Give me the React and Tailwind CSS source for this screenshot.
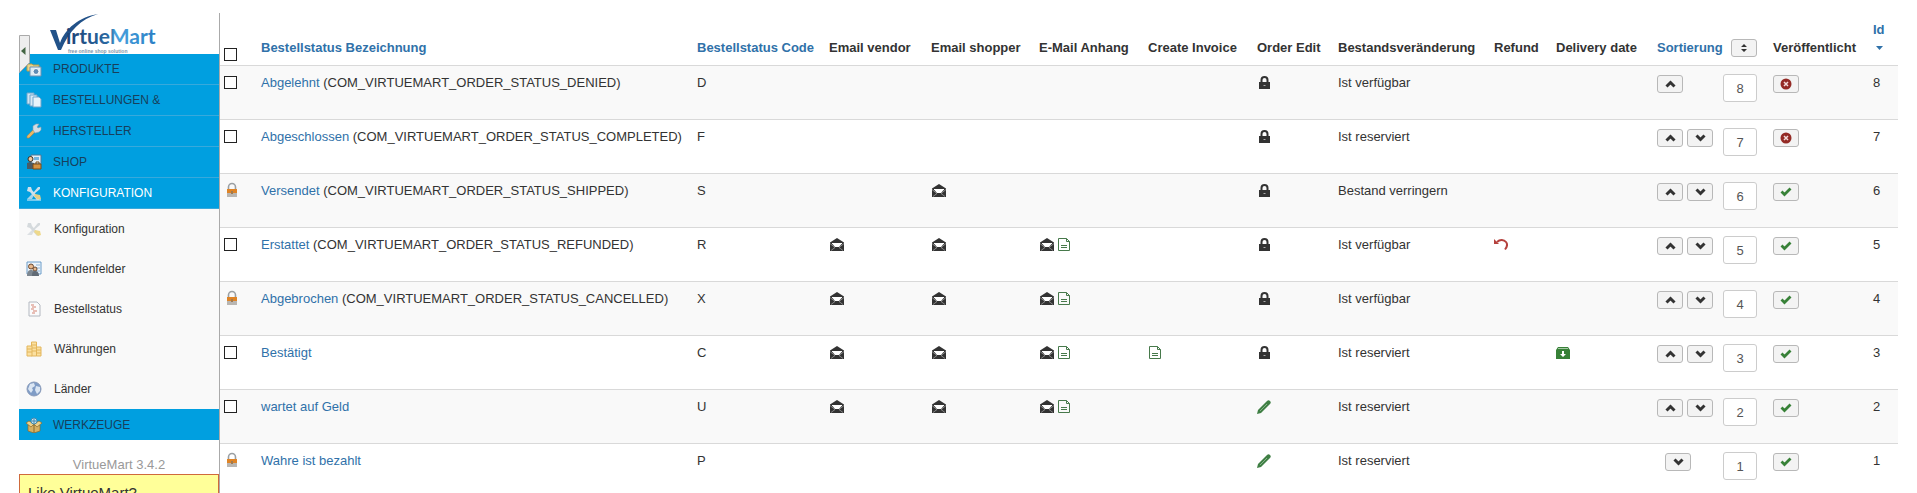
import { useState } from 'react';

const mainMenu = [
  { label: 'Produkte', icon: 'products' },
  { label: 'Bestellungen &', icon: 'orders' },
  { label: 'Hersteller', icon: 'wrench' },
  { label: 'Shop', icon: 'shop' },
  { label: 'Konfiguration', icon: 'tools', active: true },
];

const subMenu = [
  { label: 'Konfiguration', icon: 'toolsLight' },
  { label: 'Kundenfelder', icon: 'fields' },
  { label: 'Bestellstatus', icon: 'status' },
  { label: 'Währungen', icon: 'coins' },
  { label: 'Länder', icon: 'globe' },
];

const initialRows = [
  { id: 8, name: 'Abgelehnt', key: 'COM_VIRTUEMART_ORDER_STATUS_DENIED', code: 'D', edit: 'lock', stock: 'Ist verfügbar', up: true },
  { id: 7, name: 'Abgeschlossen', key: 'COM_VIRTUEMART_ORDER_STATUS_COMPLETED', code: 'F', edit: 'lock', stock: 'Ist reserviert', up: true, down: true },
  { id: 6, name: 'Versendet', key: 'COM_VIRTUEMART_ORDER_STATUS_SHIPPED', code: 'S', core: true, shopper: true, edit: 'lock', stock: 'Bestand verringern', up: true, down: true, published: true },
  { id: 5, name: 'Erstattet', key: 'COM_VIRTUEMART_ORDER_STATUS_REFUNDED', code: 'R', vendor: true, shopper: true, attach: true, edit: 'lock', stock: 'Ist verfügbar', refund: true, up: true, down: true, published: true },
  { id: 4, name: 'Abgebrochen', key: 'COM_VIRTUEMART_ORDER_STATUS_CANCELLED', code: 'X', core: true, vendor: true, shopper: true, attach: true, edit: 'lock', stock: 'Ist verfügbar', up: true, down: true, published: true },
  { id: 3, name: 'Bestätigt', code: 'C', vendor: true, shopper: true, attach: true, invoice: true, edit: 'lock', stock: 'Ist reserviert', delivery: true, up: true, down: true, published: true },
  { id: 2, name: 'wartet auf Geld', code: 'U', vendor: true, shopper: true, attach: true, edit: 'pencil', stock: 'Ist reserviert', up: true, down: true, published: true },
  { id: 1, name: 'Wahre ist bezahlt', code: 'P', core: true, edit: 'pencil', stock: 'Ist reserviert', down: true, published: true },
];

/* ---------- icons ---------- */

function ToolsShape({ handle, metal }) {
  return (
    <>
      <path d="M2 2l3 0 1 3 7 8-2 2-7-8-3-1z" fill={metal} />
      <path d="M14 2l-2 0-5 6 1 1 6-5z" fill={metal} />
      <path d="M7 8L1 14h5l2-4z" fill={metal} opacity="0.8" />
      <path d="M9 9l5 1 1 4-3 1-4-4z" fill={handle} />
    </>
  );
}

function MenuIcon({ name }) {
  const shapes = {
    products: (
      <>
        <path d="M1 3h5l1 1h6v6H1z" fill="#e9d48a" stroke="#b39a4a" />
        <path d="M4 6h11v9H4z" fill="#dcebf5" stroke="#6d93b4" />
        <circle cx="10" cy="10.500" r="3" fill="#5f8cb5" stroke="#fff" />
      </>
    ),
    orders: (
      <>
        <path d="M1 1h7v11H1z" fill="#cfe4f3" stroke="#6fa5cb" />
        <path d="M4 3h7v11H4z" fill="#d9eaf6" stroke="#6fa5cb" />
        <path d="M7 5h6l2 2v8H7z" fill="#e8f3fa" stroke="#6fa5cb" />
      </>
    ),
    wrench: (
      <>
        <path d="M1 13l6-6 2 2-6 6-2 0z" fill="#e5b766" stroke="#a98447" strokeWidth="0.600" />
        <path d="M7 7V3l3-2 3 0-2 3 1 1 3-1v3l-2 2-4 1z" fill="#d3dde4" stroke="#8ba1b0" strokeWidth="0.600" />
      </>
    ),
    shop: (
      <>
        <path d="M5 1h10v9H5z" fill="#e4eef5" stroke="#4f7795" />
        <path d="M8 3h5v3H8z" fill="#74b4dd" />
        <circle cx="4.500" cy="5" r="2.500" fill="#efc79b" stroke="#3c3128" />
        <path d="M1 15V9l3-1 4 1v6z" fill="#4b5b66" />
        <path d="M7 10h8v5H7z" fill="#d79443" stroke="#7c4d16" />
        <path d="M10 10V8h3v2" fill="none" stroke="#7c4d16" />
      </>
    ),
    tools: (
      <>
        <ToolsShape metal="#cfe0ea" handle="#e5cf86" />
        <path d="M1 15h14" stroke="#e8f2f8" />
      </>
    ),
    toolsLight: <ToolsShape metal="#d5dadd" handle="#eed98c" />,
    fields: (
      <>
        <path d="M1 1h14v12H1z" fill="#eef5fb" stroke="#6b9cc9" />
        <path d="M10 4h4M10 7h4M10 10h4" stroke="#8fb4d6" />
        <circle cx="5" cy="5.500" r="2.500" fill="#e9b88c" stroke="#6a4a32" />
        <path d="M1 15c0-5 2-6 4-6s4 1 4 6z" fill="#7d8790" />
        <circle cx="9" cy="8" r="2" fill="#e9b88c" stroke="#6a4a32" />
        <path d="M6 15c0-4 1-5 3-5s4 1 4 5z" fill="#616b75" />
      </>
    ),
    status: (
      <>
        <path d="M3 1h8l3 3v11H3z" fill="#fbfbfc" stroke="#b3b8c0" />
        <path d="M5 4h3M6 6h4M5 8h3M7 10h4M6 12h3" stroke="#d58373" />
      </>
    ),
    coins: (
      <g fill="#fbe0a0" stroke="#e3b65c">
        <path d="M5.500 1h5v14h-5z" />
        <path d="M1 5h5v10H1zM10.500 6H15v9h-4.500z" />
        <path d="M1 8h5M1 11h5M6 4h5M6 7h5M6 10h5M11 9h4M11 12h4" />
      </g>
    ),
    globe: (
      <>
        <circle cx="8" cy="8" r="7" fill="#7f9cc6" stroke="#8b9cba" />
        <path d="M4 3l4-1 1 3-3 2 1 2-2 3-3-4zM10 5l4 1 0 4-3 3-2-4z" fill="#dbe6f3" />
      </>
    ),
    box: (
      <>
        <path d="M2 8h12v6l-6 2-6-2z" fill="#d6b062" stroke="#8a6a2c" strokeWidth="0.700" />
        <path d="M0 6l3-2 5 3-3 3zM16 6l-3-2-5 3 3 3z" fill="#edd08a" stroke="#8a6a2c" strokeWidth="0.700" />
        <path d="M8 8v8" stroke="#8a6a2c" />
        <circle cx="8" cy="4" r="3" fill="#bfe3f5" stroke="#4488ad" />
        <path d="M8 2v4M6 4h4" stroke="#4488ad" />
      </>
    ),
  };
  return (
    <svg viewBox="0 0 16 16" className="size-4 shrink-0" aria-hidden="true">
      {shapes[name]}
    </svg>
  );
}

function OpenEnvelope() {
  return (
    <svg viewBox="0 0 14 13" className="mt-0.5 ml-px h-[13px] w-3.5" aria-hidden="true">
      <path d="M0 4.500L7 0l7 4.500V13H0z" fill="#333" />
      <path d="M2 5h10v.5L9 9H5L2 5.500z" fill="#fff" />
      <path d="M0 5.500l5 4-4 3M14 5.500l-5 4 4 3" fill="none" stroke="#aaa" strokeWidth="0.700" />
    </svg>
  );
}

function SheetIcon() {
  return (
    <svg viewBox="0 0 12 13" className="mt-0.5 ml-px h-[13px] w-3" fill="none" stroke="#47794b" aria-hidden="true">
      <path d="M.5 .5h8l3 3v9H.5z" />
      <path d="M8.500 .5v3h3M3 7.500h6M3 9.500h6" />
    </svg>
  );
}

function LockIcon() {
  return (
    <svg viewBox="0 0 11 13" className="mt-0.5 ml-0.5 h-[13px] w-[11px]" aria-hidden="true">
      <path d="M2.500 7V4a3 3 0 0 1 6 0v3" fill="none" stroke="#333" strokeWidth="2" />
      <path d="M0 6h11v7H0z" fill="#333" />
      <path d="M4.500 9.500h2" stroke="#aaa" />
    </svg>
  );
}

function PencilIcon() {
  return (
    <svg viewBox="0 0 14 14" className="mt-0.5 h-3.5 w-3.5" aria-hidden="true">
      <path d="M0 14l1-4L10 1c1-1 2-1 3 0s1 2 0 3L4 13z" fill="#3f7f44" />
      <path d="M3 11l7-7" stroke="#86b389" />
    </svg>
  );
}

function UndoIcon() {
  return (
    <svg viewBox="0 0 14 14" className="mt-0.5 h-3.5 w-3.5" aria-hidden="true">
      <path d="M3 4c3-3 7-2.500 9 0s1 5-1 7.500" fill="none" stroke="#b5413d" strokeWidth="2" />
      <path d="M0 1v5h5z" fill="#b5413d" />
    </svg>
  );
}

function ArchiveIcon() {
  return (
    <svg viewBox="0 0 14 13" className="mt-0.5 h-[13px] w-3.5" aria-hidden="true">
      <path d="M2 1h10l2 3v9H0V4z" fill="#378137" />
      <path d="M2 2.500h10" stroke="#a4c8a4" />
      <path d="M6 5h2v3h2l-3 3-3-3h2z" fill="#fff" />
    </svg>
  );
}

function PadlockIcon() {
  return (
    <svg viewBox="0 0 12 16" className="ml-0.5 h-4 w-3" aria-hidden="true">
      <path d="M2.500 8V5a3.500 3.500 0 0 1 7 0v3" fill="none" stroke="#9a9fa3" strokeWidth="1.600" />
      <path d="M1 7h10v4H1z" fill="#df8426" />
      <path d="M1 11h10v4H1z" fill="#b9b6b2" />
      <path d="M5 9h2v3H5z" fill="#a07a50" />
    </svg>
  );
}

function Chevron({ dir }) {
  return (
    <svg viewBox="0 0 11 8" className="h-2 w-[11px]" aria-hidden="true">
      <path d={dir === 'up' ? 'M1.500 6.500l4-4 4 4' : 'M1.500 1.500l4 4 4-4'} fill="none" stroke="#333" strokeWidth="3" />
    </svg>
  );
}

function Logo() {
  return (
    <svg viewBox="0 0 108 41" className="h-[41px] w-[108px]" role="img" aria-label="VirtueMart">
      <defs>
        <linearGradient id="vm" x1="0" x2="1">
          <stop offset="0" stopColor="#1d4074" />
          <stop offset="0.500" stopColor="#2b6ca5" />
          <stop offset="0.550" stopColor="#4aa3df" />
          <stop offset="1" stopColor="#2a7fc4" />
        </linearGradient>
      </defs>
      <path d="M0 17h6l4 13C15 16 29 4 48 1 31 6 19 18 11 37H8z" fill="#225289" />
      <text x="16" y="31" fontFamily="Lato, Liberation Sans, sans-serif" fontWeight="700" fontSize="21" fill="url(#vm)">irtueMart</text>
      <text x="18" y="40" fontFamily="Liberation Sans, sans-serif" fontWeight="700" fontSize="5" fill="#8297ab">free online shop solution</text>
    </svg>
  );
}

/* ---------- parts ---------- */

function MicroButton({ label, children, onClick }) {
  return (
    <button
      type="button"
      aria-label={label}
      onClick={onClick}
      className="inline-flex h-[18px] w-[26px] shrink-0 items-center justify-center rounded-[3px] border border-[#b8b8b8] bg-[#f3f3f3]"
    >
      {children}
    </button>
  );
}

function Check({ label }) {
  return (
    <input
      type="checkbox"
      aria-label={label}
      className="block size-[13px] appearance-none border border-[#222] bg-white checked:bg-[#3071a9]"
    />
  );
}

function Sidebar() {
  return (
    <aside className="relative ml-[19px] w-[201px] shrink-0 border-r border-[#aaa]">
      <div className="flex pl-[31px]">
        <Logo />
      </div>
      <nav className="text-xs">
        <ul>
          {mainMenu.map(item => (
            <li key={item.label} className="border-b border-[#38a9dc] bg-[#009fe0]">
              <a href="#" className={`flex h-[30px] items-center gap-[11px] pl-[7px] uppercase ${item.active ? 'text-white' : 'text-[#173f5c]'}`}>
                <MenuIcon name={item.icon} />
                {item.label}
              </a>
            </li>
          ))}
        </ul>
        <ul className="bg-[#f9f9f9]">
          {subMenu.map(item => (
            <li key={item.label}>
              <a href="#" className="flex h-10 items-center gap-3 pl-[7px]">
                <MenuIcon name={item.icon} />
                {item.label}
              </a>
            </li>
          ))}
        </ul>
        <a href="#" className="flex h-[31px] items-center gap-[11px] bg-[#009fe0] pl-[7px] text-[#173f5c] uppercase">
          <MenuIcon name="box" />
          Werkzeuge
        </a>
      </nav>
      <p className="pt-4 text-center leading-[18px] text-[#999]">VirtueMart 3.4.2</p>
      <div className="border border-[#cf6a3c] bg-[#ffff99] px-2 py-2 text-[15px] leading-5">Like VirtueMart?</div>

      {/* collapse handle lying over the menu edge */}
      <button type="button" aria-label="Menü einklappen" className="absolute top-[22px] left-0">
        <svg viewBox="0 0 11 38" className="h-[38px] w-[11px]" aria-hidden="true">
          <path d="M.5 .5h10v27l-10 10z" fill="#eee" stroke="#aaa" />
          <path d="M6.500 12v8L2 16z" fill="#446644" />
        </svg>
      </button>
    </aside>
  );
}

function StatusRow({ row, onToggle, onOrder }) {
  return (
    <tr className="border-t border-[#d9d9d9] align-top odd:bg-[#f9f9f9] [&>td]:p-2">
      <td>
        <div className="-ml-1">
          {row.core ? <PadlockIcon /> : <div className="pt-0.5"><Check label={`${row.name} auswählen`} /></div>}
        </div>
      </td>
      <td className="whitespace-nowrap">
        <a href="#" className="text-[#3071a9]">{row.name}</a>
        {row.key && ` (${row.key})`}
      </td>
      <td>{row.code}</td>
      <td>{row.vendor && <OpenEnvelope />}</td>
      <td>{row.shopper && <OpenEnvelope />}</td>
      <td>
        {row.attach && (
          <div className="flex gap-[3px]">
            <OpenEnvelope />
            <SheetIcon />
          </div>
        )}
      </td>
      <td>{row.invoice && <SheetIcon />}</td>
      <td>{row.edit === 'lock' ? <LockIcon /> : <PencilIcon />}</td>
      <td className="whitespace-nowrap">{row.stock}</td>
      <td>{row.refund && <UndoIcon />}</td>
      <td>{row.delivery && <ArchiveIcon />}</td>
      <td>
        <div className="flex items-start justify-between">
          <div className={`flex gap-1 pt-px ${row.up ? '' : 'pl-2'}`}>
            {row.up && <MicroButton label="Nach oben"><Chevron dir="up" /></MicroButton>}
            {row.down && <MicroButton label="Nach unten"><Chevron dir="down" /></MicroButton>}
          </div>
          <input
            type="text"
            aria-label={`Sortierung ${row.name}`}
            value={row.order ?? row.id}
            onChange={e => onOrder(row.id, e.target.value)}
            className="mb-[9px] h-7 w-[34px] rounded-[3px] border border-[#ccc] bg-white text-center text-[#555]"
          />
        </div>
      </td>
      <td>
        <div className="flex pt-px">
          <MicroButton label="Veröffentlicht umschalten" onClick={() => onToggle(row.id)}>
            {row.published ? (
              <svg viewBox="0 0 12 10" className="h-2.5 w-3" aria-hidden="true">
                <path d="M1.500 4.500L4.500 7.500 10.500 1.500" fill="none" stroke="#378137" strokeWidth="2.800" />
              </svg>
            ) : (
              <svg viewBox="0 0 12 12" className="size-3" aria-hidden="true">
                <circle cx="6" cy="6" r="5.500" fill="#942a25" />
                <path d="M4 4l4 4M8 4L4 8" stroke="#f3dcdb" strokeWidth="1.500" />
              </svg>
            )}
          </MicroButton>
        </div>
      </td>
      <td>{row.id}</td>
    </tr>
  );
}

export default function App() {
  const [rows, setRows] = useState(initialRows);

  const togglePublished = id => {
    setRows(prev => prev.map(r => (r.id === id ? { ...r, published: !r.published } : r)));
  };

  const setOrder = (id, order) => {
    setRows(prev => prev.map(r => (r.id === id ? { ...r, order } : r)));
  };

  return (
    <div className="flex h-screen overflow-hidden bg-white pt-[13px] font-['Liberation_Sans',Arial,sans-serif] text-[13px] leading-[18px] text-[#333]">
      <Sidebar />
      <main className="min-w-0 flex-1 pr-[19px]">
        <table className="w-full table-fixed border-collapse text-left">
          <colgroup>
            <col className="w-[33px]" />
            <col />
            <col className="w-[132px]" />
            <col className="w-[102px]" />
            <col className="w-[108px]" />
            <col className="w-[109px]" />
            <col className="w-[109px]" />
            <col className="w-[81px]" />
            <col className="w-[156px]" />
            <col className="w-[62px]" />
            <col className="w-[101px]" />
            <col className="w-[116px]" />
            <col className="w-[100px]" />
            <col className="w-[33px]" />
          </colgroup>
          <thead>
            <tr className="align-bottom whitespace-nowrap [&>th]:p-2">
              <th><div className="-mb-1 -ml-1"><Check label="Alle auswählen" /></div></th>
              <th><a href="#" className="text-[#3071a9]">Bestellstatus Bezeichnung</a></th>
              <th><a href="#" className="text-[#3071a9]">Bestellstatus Code</a></th>
              <th>Email vendor</th>
              <th>Email shopper</th>
              <th>E-Mail Anhang</th>
              <th>Create Invoice</th>
              <th>Order Edit</th>
              <th>Bestandsveränderung</th>
              <th>Refund</th>
              <th>Delivery date</th>
              <th>
                <div className="flex items-center justify-between">
                  <a href="#" className="text-[#3071a9]">Sortierung</a>
                  <MicroButton label="Sortierung speichern">
                    <svg viewBox="0 0 6 8" className="h-2 w-1.5" fill="#333" aria-hidden="true">
                      <path d="M3 0l3 3H0zM3 8L0 5h6z" />
                    </svg>
                  </MicroButton>
                </div>
              </th>
              <th>Veröffentlicht</th>
              <th>
                <a href="#" className="block text-[#3071a9]">
                  Id
                  <span className="flex h-[18px] items-center pl-[3px]">
                    <svg viewBox="0 0 7 4" className="h-1 w-[7px]" fill="#3071a9" aria-hidden="true">
                      <path d="M0 0h7L3.500 4z" />
                    </svg>
                  </span>
                </a>
              </th>
            </tr>
          </thead>
          <tbody>
            {rows.map(row => (
              <StatusRow key={row.id} row={row} onToggle={togglePublished} onOrder={setOrder} />
            ))}
          </tbody>
        </table>
      </main>
    </div>
  );
}
